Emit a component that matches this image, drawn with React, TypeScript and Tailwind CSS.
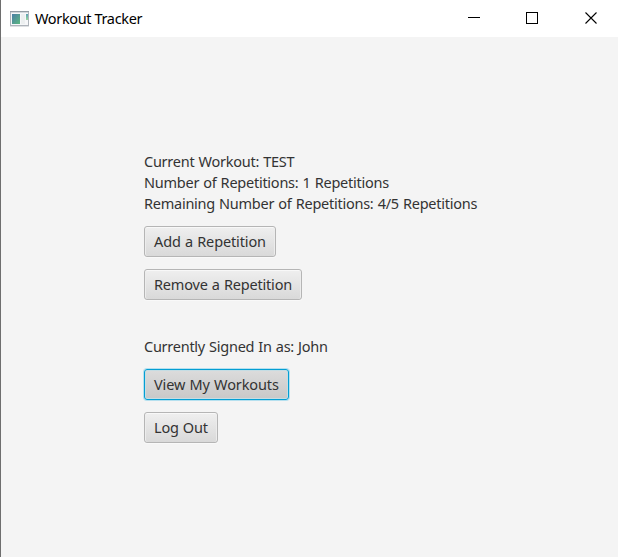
import type { ReactNode } from "react";

function TitleBar() {
  return (
    <header className="flex h-[37px] items-center bg-white pl-[9px]">
      <svg width="19" height="16" viewBox="0 0 19 16" className="shrink-0">
        <defs>
          <linearGradient id="pane" x1="0" y1="0" x2="1" y2="1">
            <stop offset="0" stopColor="#4a7ea6" />
            <stop offset="1" stopColor="#5cb880" />
          </linearGradient>
          <linearGradient id="side" x1="0" y1="0" x2="0" y2="1">
            <stop offset="0" stopColor="#5c9fb4" />
            <stop offset="1" stopColor="#98d99c" />
          </linearGradient>
        </defs>
        <rect x="0.5" y="0.5" width="18" height="14" fill="#f6f7f9" stroke="#aeb4bb" />
        <rect x="0" y="0" width="19" height="1" fill="#939ca4" />
        <rect x="1" y="1" width="17" height="1" fill="#d3d8dc" />
        <rect x="0" y="15" width="19" height="1" fill="#dfe1e4" />
        <rect x="2" y="3" width="8" height="10" fill="url(#pane)" />
        <rect x="11" y="3" width="4" height="10" fill="#eceff0" />
        <rect x="16" y="3" width="2" height="6" fill="url(#side)" />
      </svg>
      <h1 className="ml-1.5 grow pb-0.5 text-[14.5px] leading-5 tracking-[-0.36px] whitespace-nowrap text-black">
        Workout Tracker
      </h1>
      <svg width="151" height="37" viewBox="0 0 151 37" shapeRendering="crispEdges" className="shrink-0">
        <path d="M1 17.5H13" stroke="#000" />
        <rect x="59.5" y="12.5" width="11" height="11" fill="none" stroke="#000" />
        <path d="M118.5 12.5L129.5 23.5M129.5 12.5L118.5 23.5" stroke="#000" strokeWidth="1.1" shapeRendering="auto" />
      </svg>
    </header>
  );
}

function Button({ children, className, focused = false }: { children: ReactNode; className: string; focused?: boolean }) {
  const look = focused
    ? "border-[#039ed3] from-[#dcdcdc] to-[#c8c8c8] shadow-[0_0_0_1px_#b5e0ef,inset_0_0_0_1px_#c5dde4]"
    : "border-[#b5b5b5] from-[#efefef] to-[#d9d9d9] shadow-[inset_0_1px_0_#f8f8f8,inset_1px_0_0_#ececec,inset_-1px_0_0_#ececec,0_1px_0_#f9f9f9]";
  return (
    <button
      className={`flex h-[31px] items-center rounded-[3px] border bg-linear-to-b pb-0.5 pl-[9px] leading-5 whitespace-nowrap [word-spacing:0.6px] ${look} ${className}`}
    >
      {children}
    </button>
  );
}

export default function App() {
  return (
    <div className="flex h-[557px] w-[618px] flex-col border-l border-[#6e6e6e] bg-[#f4f4f4] font-['Noto_Sans','Open_Sans',sans-serif] text-[14.5px] text-[#333333]">
      <TitleBar />
      <main className="flex flex-col items-start pt-[114px] pl-[143px] [word-spacing:0.6px]">
        <div className="leading-[21px] tracking-[-0.25px] whitespace-nowrap">
          <p>Current Workout: TEST</p>
          <p>Number of Repetitions: 1 Repetitions</p>
          <p>Remaining Number of Repetitions: 4/5 Repetitions</p>
        </div>
        <div className="mt-3 flex flex-col gap-3">
          <Button className="w-[132px] tracking-[-0.13px]">Add a Repetition</Button>
          <Button className="w-[158px] tracking-[-0.19px]">Remove a Repetition</Button>
        </div>
        <p className="mt-9 leading-[21px] tracking-[-0.26px] whitespace-nowrap">Currently Signed In as: John</p>
        <div className="mt-3 flex flex-col gap-3">
          <Button focused className="w-[145px] tracking-[-0.12px]">View My Workouts</Button>
          <Button className="w-[74px] tracking-[-0.2px]">Log Out</Button>
        </div>
      </main>
    </div>
  );
}
